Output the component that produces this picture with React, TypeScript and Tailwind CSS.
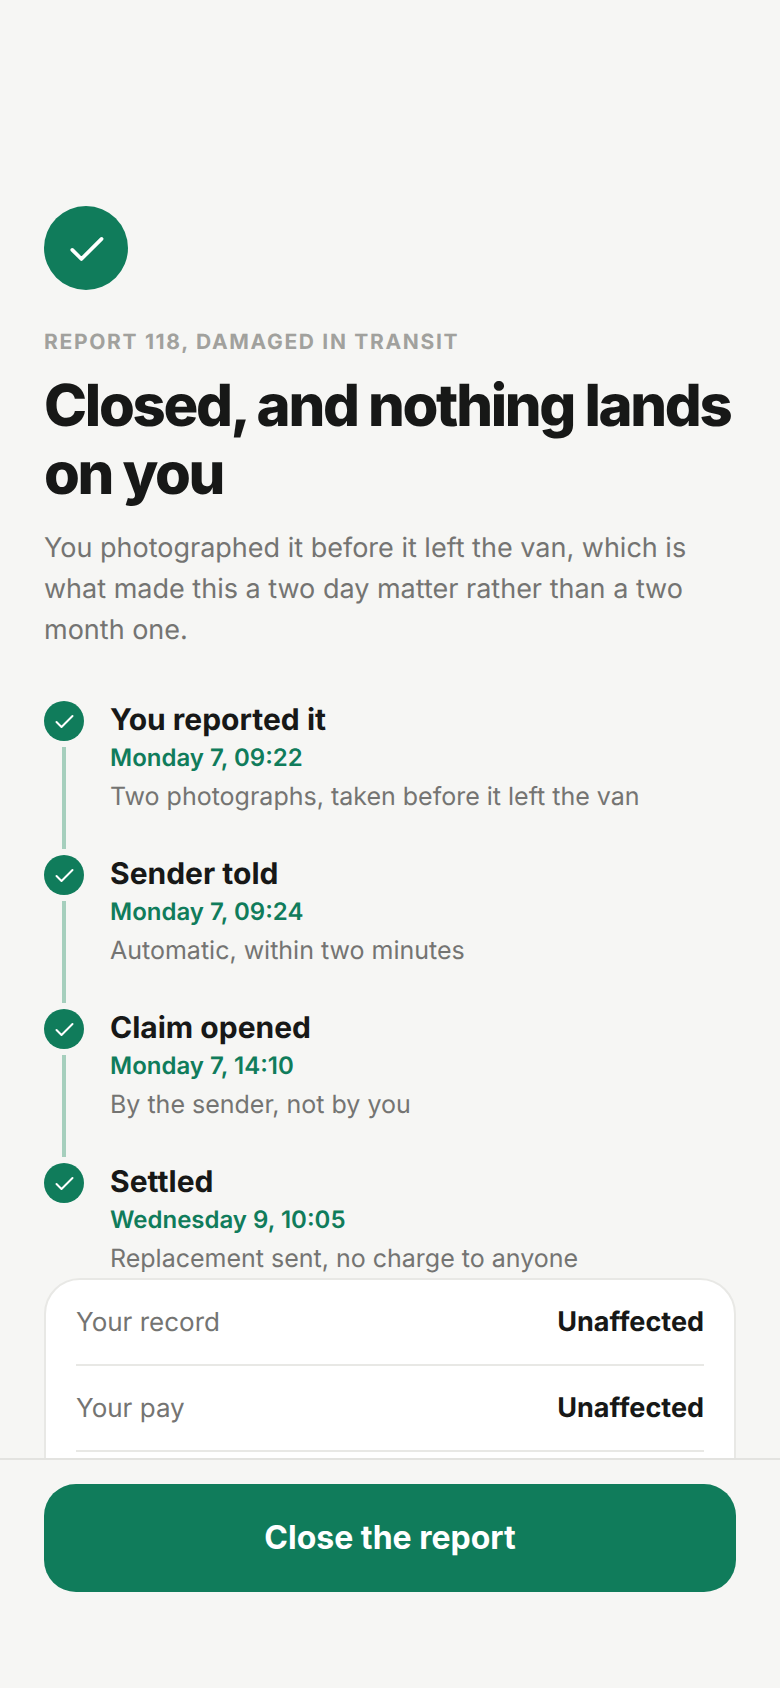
const steps = [
  { title: "You reported it", time: "Monday 7, 09:22", note: "Two photographs, taken before it left the van" },
  { title: "Sender told", time: "Monday 7, 09:24", note: "Automatic, within two minutes" },
  { title: "Claim opened", time: "Monday 7, 14:10", note: "By the sender, not by you" },
  { title: "Settled", time: "Wednesday 9, 10:05", note: "Replacement sent, no charge to anyone" },
]

const rows = [
  { label: "Your record", value: "Unaffected" },
  { label: "Your pay", value: "Unaffected" },
]

const Tick = ({ className, width }: { className: string; width: number }) => (
  <svg viewBox="0 0 24 24" className={className} fill="none" stroke="currentColor" strokeWidth={width} strokeLinecap="round" strokeLinejoin="round">
    <path d="M20.5 7 9.5 18l-5-5" />
  </svg>
)

export default function App() {
  return (
    <div className="h-[1688px] w-[780px] flex flex-col overflow-hidden bg-[#f6f6f4] font-['Inter',sans-serif] [text-rendering:geometricPrecision]">
      <div className="flex-1 min-h-0 overflow-hidden px-[44px] pt-[206px]">
        <div className="w-[84px] h-[84px] rounded-full bg-[#107c5b] flex items-center justify-center">
          <Tick className="w-[44px] h-[44px] text-white" width={2} />
        </div>

        <div className="mt-[39px] text-[21px] leading-[28px] font-bold tracking-[1.68px] text-[#a1a19d]">
          REPORT 118, DAMAGED IN TRANSIT
        </div>
        <h1 className="mt-[14px] text-[58px] leading-[68px] font-extrabold tracking-[-2.32px] text-[#171817]">
          Closed, and nothing lands on you
        </h1>
        <p className="mt-[20px] text-[27px] leading-[41px] text-[#747472]">
          You photographed it before it left the van, which is what made this a two day matter rather than a two month one.
        </p>

        <div className="mt-[51px] flex flex-col">
          {steps.map((step, i) => (
            <div key={step.title} className="flex gap-[26px] h-[154px]">
              <div className="w-[40px] flex flex-col items-center">
                <div className="w-[40px] h-[40px] shrink-0 rounded-full bg-[#107c5b] flex items-center justify-center">
                  <Tick className="w-[24px] h-[24px] text-white" width={2} />
                </div>
                {i < steps.length - 1 && <div className="w-[4px] h-[102px] mt-[6px] bg-[#a6cfbd]" />}
              </div>
              <div>
                <div className="text-[30px] leading-[38px] font-bold text-[#171817]">{step.title}</div>
                <div className="mt-[1px] text-[24px] leading-[36px] font-semibold text-[#107c5b]">{step.time}</div>
                <div className="mt-[2px] text-[25px] leading-[38px] text-[#747472]">{step.note}</div>
              </div>
            </div>
          ))}
        </div>

        <div className="-mt-[39px] relative h-[300px] bg-white border-2 border-[#e8e8e5] rounded-[36px] px-[30px]">
          {rows.map((row) => (
            <div key={row.label} className="flex items-center justify-between h-[86px] border-b-2 border-[#e8e8e5]">
              <span className="text-[26px] text-[#747472]">{row.label}</span>
              <span className="text-[27px] font-bold text-[#171817]">{row.value}</span>
            </div>
          ))}
        </div>
      </div>

      <div className="h-[230px] shrink-0 border-t-2 border-[#e3e3e0] bg-[#f6f6f4] px-[44px] pt-[24px]">
        <button className="w-full h-[108px] rounded-[32px] bg-[#107c5b] text-white text-[32px] font-bold">
          Close the report
        </button>
      </div>
    </div>
  )
}
